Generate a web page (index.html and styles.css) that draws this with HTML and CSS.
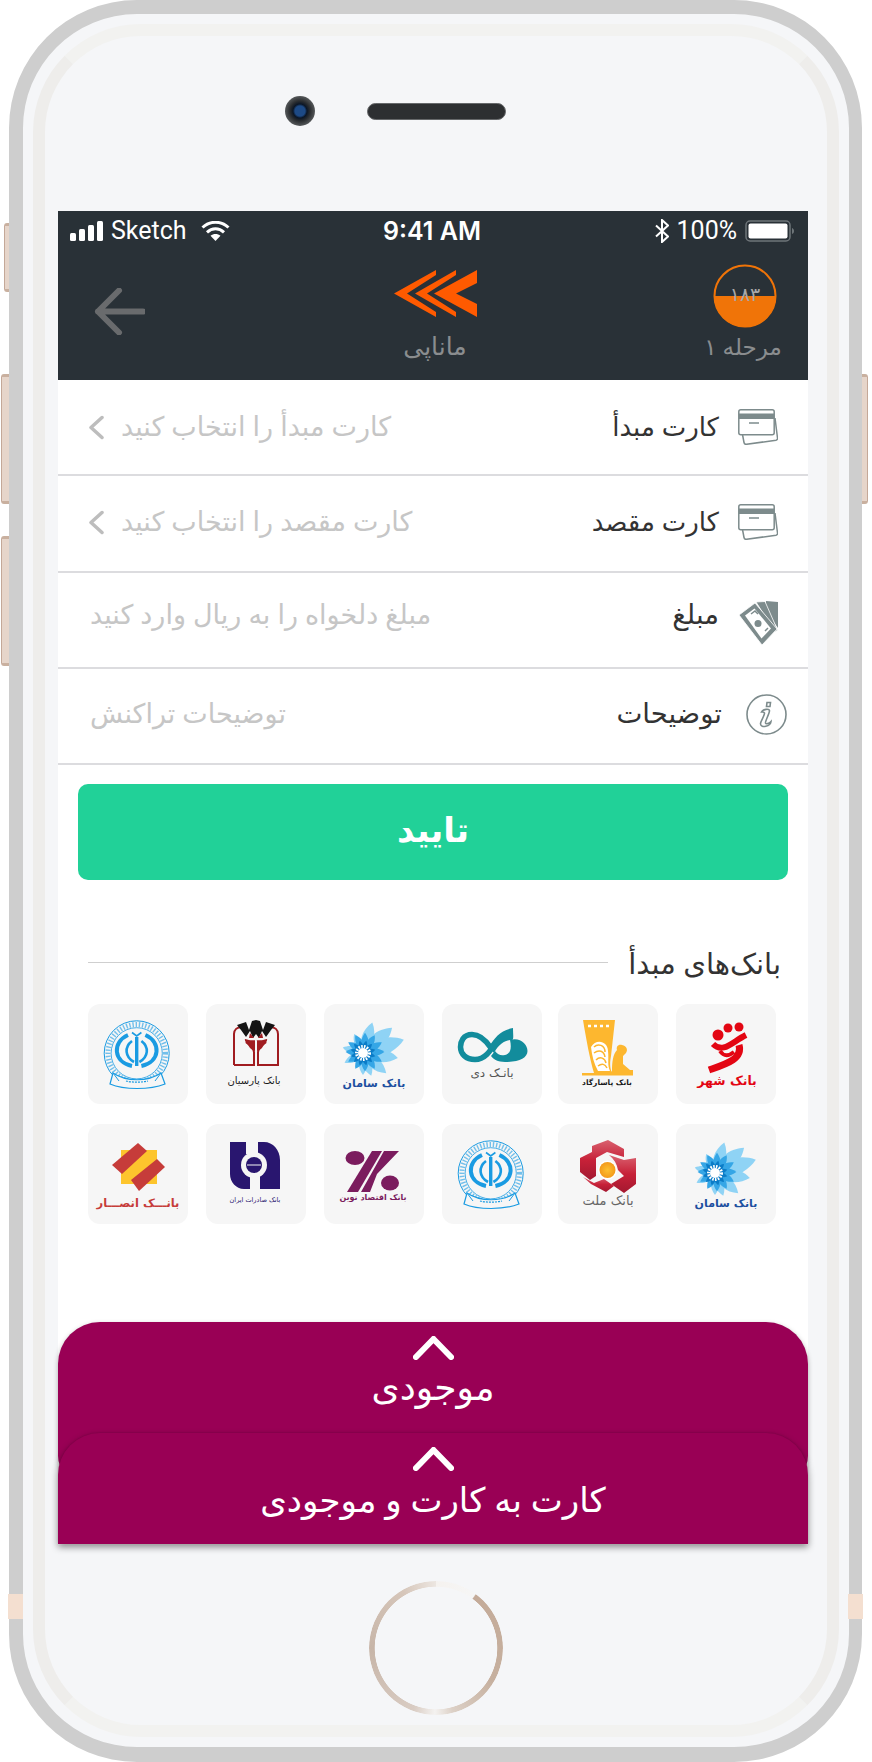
FILE: index.html
```html
<!DOCTYPE html>
<html lang="fa">
<head>
<meta charset="utf-8">
<title>مانا‌پی</title>
<link rel="stylesheet" href="styles.css">
</head>
<body>
<svg class="defs" width="0" height="0" aria-hidden="true">
  <defs>
    <path id="petal" d="M0 0C5.5-6 5.5-15 0-22C-5.5-15-5.5-6 0 0Z"/>
    <g id="ring">
      <use href="#petal"/><use href="#petal" transform="rotate(30)"/><use href="#petal" transform="rotate(60)"/><use href="#petal" transform="rotate(90)"/><use href="#petal" transform="rotate(120)"/><use href="#petal" transform="rotate(150)"/><use href="#petal" transform="rotate(180)"/><use href="#petal" transform="rotate(210)"/><use href="#petal" transform="rotate(240)"/><use href="#petal" transform="rotate(270)"/><use href="#petal" transform="rotate(300)"/><use href="#petal" transform="rotate(330)"/>
    </g>
    <g id="saman">
      <g fill="#8fd3f5">
        <use href="#petal" transform="translate(39 49) rotate(17) scale(1.45)"/>
        <use href="#petal" transform="translate(39 49) rotate(49) scale(1.75)"/>
        <use href="#petal" transform="translate(39 49) rotate(72) scale(1.95)"/>
        <use href="#petal" transform="translate(39 49) rotate(98) scale(1.6)"/>
        <use href="#petal" transform="translate(39 49) rotate(131) scale(1.4)"/>
        <use href="#petal" transform="translate(39 49) rotate(160) scale(1.1)"/>
        <use href="#petal" transform="translate(39 49) rotate(180) scale(1)"/>
        <use href="#petal" transform="translate(39 49) rotate(242) scale(.95)"/>
        <use href="#petal" transform="translate(39 49) rotate(285) scale(.95)"/>
        <use href="#petal" transform="translate(39 49) rotate(335) scale(.95)"/>
      </g>
      <use href="#ring" fill="#35a6e6" transform="translate(41 48) scale(.88)"/>
      <use href="#ring" fill="#0b7cc7" transform="translate(39 49) rotate(15) scale(.58)"/>
      <circle cx="39" cy="49" r="5" fill="#fff"/>
      <circle cx="39" cy="49" r="6.500" fill="none" stroke="#fff" stroke-width="3" stroke-dasharray="1.6 1.2"/>
    </g>
    <g id="sepah" fill="none" stroke="#1a9be2">
      <circle cx="48.700" cy="49.300" r="32.500" stroke-width="1"/>
      <circle cx="48.700" cy="49.300" r="28.800" stroke-width="5" stroke-dasharray="1.4 1.8" stroke-opacity=".6"/>
      <circle cx="48.700" cy="49.300" r="25.600" stroke-width=".8"/>
      <path d="M40 31C24 38 25 58 44 62" stroke-width="4"/>
      <path d="M57.400 31C73.400 38 72.400 58 53.400 62" stroke-width="4"/>
      <path d="M44 37C36 43 37 53 46 58" stroke-width="2.600"/>
      <path d="M53.400 37C61.400 43 60.400 53 51.400 58" stroke-width="2.600"/>
      <path d="M48.700 33V62" stroke-width="3.400"/>
      <path d="M44 28.500L48.700 32L53.400 28.500" stroke-width="1.600"/>
      <path d="M25 69C38 78 60 78 73 69L77 80C62 86 36 86 22 80Z" fill="#f6f6f6" stroke-width="1.200"/>
      <path d="M25 69L31 77M73 69L67 77" stroke-width="1"/>
      <path d="M38 77C44 78.500 54 78.500 60 77" stroke-width="1.200" stroke-dasharray="2 1"/>
    </g>
    <g id="card" fill="none" stroke="#7d8b8c" stroke-width="1.500">
      <path d="M4.500 25.500L6 33.500C6.300 35 7.300 35.500 8.500 35.300L38 31.200C39.200 31 39.700 30 39.500 29L37 9"/>
      <rect x=".8" y=".8" width="35.400" height="25" rx="2" fill="#fff"/>
      <rect x=".8" y="4.500" width="35.400" height="5.500" fill="#7d8b8c" stroke="none"/>
      <path d="M11 14H21"/>
    </g>
    <path id="chev" d="M3 21L20.500 3L38 21" fill="none" stroke="#fff" stroke-width="6" stroke-linecap="round" stroke-linejoin="round"/>
  </defs>
</svg>

<div class="device">
  <span class="side side-a"></span><span class="side side-b"></span><span class="side side-c"></span><span class="side side-d"></span>
  <span class="band band-l"></span><span class="band band-r"></span>
  <div class="bezel">
    <div class="earpiece">
      <span class="camera"></span>
      <span class="speaker"></span>
    </div>

    <main class="screen" dir="rtl">
      <div class="topbar">
        <div class="status" dir="ltr">
          <div class="status-side">
            <svg class="ic-signal" width="33" height="20" viewBox="0 0 33 20"><rect x="0" y="12" width="6" height="8" rx="1.500" fill="#fff"/><rect x="9" y="8" width="6" height="12" rx="1.500" fill="#fff"/><rect x="18" y="4" width="6" height="16" rx="1.500" fill="#fff"/><rect x="27" y="0" width="6" height="20" rx="1.500" fill="#fff"/></svg>
            <span>Sketch</span>
            <svg class="ic-wifi" width="29" height="20" viewBox="0 0 29 20" fill="none" stroke="#fff" stroke-width="3"><path d="M1.500 6.500C9 -.5 20 -.5 27.500 6.500"/><path d="M6 11.300C11 6.700 18 6.700 23 11.300"/><path d="M14.500 20L9.500 14.800C12.500 12.300 16.500 12.300 19.500 14.800Z" fill="#fff" stroke="none"/></svg>
          </div>
          <span class="clock">9:41 AM</span>
          <div class="status-side status-right">
            <svg width="14" height="24" viewBox="0 0 14 24" fill="none" stroke="#fff" stroke-width="2"><path d="M1 6.500L13 17.500L7 23V1L13 6.500L1 17.500"/></svg>
            <span>100%</span>
            <svg class="ic-batt" width="49" height="22" viewBox="0 0 49 22"><rect x="1" y="1" width="44" height="20" rx="4" fill="none" stroke="#6e7579" stroke-width="1.500"/><rect x="3.500" y="3.500" width="39" height="15" rx="2" fill="#fff"/><path d="M47 8C48.300 8.500 49 9.500 49 11S48.300 13.500 47 14Z" fill="#6e7579"/></svg>
          </div>
        </div>
        <header class="appbar">
          <div class="appcol step">
            <svg class="step-ring" width="64" height="64" viewBox="0 0 64 64"><circle cx="32" cy="32" r="30.500" fill="none" stroke="#f07408" stroke-width="2"/><path d="M1 32H63A31 31 0 0 1 1 32Z" fill="#f07408"/><text class="step-num" x="32" y="37" text-anchor="middle">۱۸۳</text></svg>
            <span class="appcap">مرحله ۱</span>
          </div>
          <div class="appcol brand">
            <svg width="83" height="47" viewBox="0 0 83 47" fill="#ff5a00"><path d="M0 23.500L42 0V5L13 23.500L42 42V47Z"/><path d="M21 23.500L62 0V5L33 23.500L62 42V47Z"/><path d="M40 23.500L83 0V13L62 23.500L83 34V47Z"/></svg>
            <span class="appcap">مانا‌پی</span>
          </div>
          <div class="back">
            <svg width="51" height="47" viewBox="0 0 51 47" fill="none" stroke="#696b6d" stroke-width="6" stroke-linecap="round" stroke-linejoin="round"><path d="M49 23.500H4M25 2.500L4 23.500L25 44.500"/></svg>
          </div>
        </header>
      </div>

      <section class="form">
        <div class="row">
          <div class="field"><svg class="ic-card" width="40" height="36" viewBox="0 0 40 36"><use href="#card"/></svg><span class="label">کارت مبدأ</span></div>
          <div class="choice"><span class="hint">کارت مبدأ را انتخاب کنید</span><svg width="16" height="25" viewBox="0 0 16 25" fill="none" stroke="#bdbdbd" stroke-width="3.500" stroke-linecap="round" stroke-linejoin="round"><path d="M14 2.500L3 12.500L14 22.500"/></svg></div>
        </div>
        <div class="row row-second">
          <div class="field"><svg class="ic-card" width="40" height="36" viewBox="0 0 40 36"><use href="#card"/></svg><span class="label">کارت مقصد</span></div>
          <div class="choice"><span class="hint">کارت مقصد را انتخاب کنید</span><svg width="16" height="25" viewBox="0 0 16 25" fill="none" stroke="#bdbdbd" stroke-width="3.500" stroke-linecap="round" stroke-linejoin="round"><path d="M14 2.500L3 12.500L14 22.500"/></svg></div>
        </div>
        <div class="row row-plain row-amount">
          <div class="field"><svg class="ic-money" width="40" height="44" viewBox="0 0 40 44"><path d="M28 0L40 1L40 27L28 10Z" fill="#7d8b8c"/><path d="M18 1L27 .5L39.500 29L37 31Z" fill="#7d8b8c" stroke="#fff" stroke-width=".8"/><path d="M1 14L17 2L39 28L24 44Z" fill="#7d8b8c" stroke="#fff" stroke-width=".8"/><path d="M7 14.500L16.500 7.500L33 27.500L23.500 37.500Z" fill="#fff"/><path d="M13 13L17 10L20 13M27 30L30 27" stroke="#7d8b8c" stroke-width="1.500" fill="none"/><circle cx="20" cy="22.500" r="3.500" fill="#7d8b8c"/></svg><span class="label">مبلغ</span></div>
          <span class="hint">مبلغ دلخواه را به ریال وارد کنید</span>
        </div>
        <div class="row row-plain row-info">
          <div class="field"><svg class="ic-info" width="41" height="41" viewBox="0 0 41 41" fill="none" stroke="#7d8b8c" stroke-width="1.600"><circle cx="20.500" cy="20.500" r="19.500"/><path d="M21 8.500L24.500 8.500L24 12.500L20.500 12.500Z"/><path d="M15.500 18C17 15 23.500 14.500 23.500 16.500C23.500 20 19 27 19.500 29C20 30.500 23 29.500 25 27.500C24.500 32.500 15 34.500 14.500 30C14.200 27 19 21.500 18.500 19C18 17.500 16.500 18 15.500 18Z"/></svg><span class="label">توضیحات</span></div>
          <span class="hint">توضیحات تراکنش</span>
        </div>
      </section>

      <div class="actions"><button class="confirm" type="button">تایید</button></div>

      <section class="banks">
        <div class="banks-head"><span class="banks-title">بانک‌های مبدأ</span><span class="banks-rule"></span></div>
        <div class="bank-grid">
          <div class="tile">
            <svg viewBox="0 0 100 100"><circle cx="42" cy="31" r="5.500" fill="#e30613"/><circle cx="52" cy="24" r="4.500" fill="#e30613"/><circle cx="63" cy="23" r="4.500" fill="#e30613"/><path d="M37 40C47 50 56 38 70 31" fill="none" stroke="#e30613" stroke-width="6"/><path d="M63 41C67 55 50 60 33 66" fill="none" stroke="#e30613" stroke-width="7"/><path d="M44 47C48 53 53 52 58 48" fill="none" stroke="#e30613" stroke-width="4"/><text class="cap cap-shahr" x="51" y="81" text-anchor="middle">بانک شهر</text></svg>
          </div>
          <div class="tile">
            <svg viewBox="0 0 100 100"><path d="M25 16H57L53 52C51 62 53 66 54 69H36C32 56 28 34 25 16Z" fill="#fdb72f"/><path d="M30 22h3M36 22h3M42 22h3M48 22h3" stroke="#fff" stroke-width="2.500"/><path d="M33 43C38 34 50 37 50 47C51 55 49 61 52 67H40C36 60 34 52 33 43Z" fill="#fff"/><path d="M36 43C40 39 47 41 47 48M36 49C41 45 46 47 47 53M38 56C42 52 47 54 48 59M40 62C44 59 47 60 49 64" stroke="#fdb72f" stroke-width="1.500" fill="none"/><path d="M54 67C54 58 55 50 59 46C58 43 60 40 64 41C69 42 70 46 68 49L65 52V60L72 66H75V69H52Z" fill="#fdb72f"/><rect x="24" y="69" width="51" height="2.500" fill="#fdb72f"/><text class="cap cap-pasargad" x="49" y="81" text-anchor="middle">بانک پاسارگاد</text></svg>
          </div>
          <div class="tile">
            <svg viewBox="0 0 100 100"><path d="M49 44C43 35 37 30.500 30 30.500C21 30.500 18.500 38 18.500 43C18.500 50 24 55.500 33 55.500C44 55.500 50 44 54 38" fill="none" stroke="#128c9c" stroke-width="5.500"/><path d="M71 24C59 26 52 34 47 43L52 49C57 40 63 36 70 36C72 36 71 30 71 24Z" fill="#128c9c"/><path d="M68 36C78 33 85.500 40 85.500 47C85.500 54 77 58 63 58C56 58 51 55 49 52L53 47C56 51 59 52 63 51C68 50 70 45 68 36Z" fill="#128c9c"/><text class="cap cap-dey" x="50" y="73" text-anchor="middle">بانـک دی</text></svg>
          </div>
          <div class="tile">
            <svg viewBox="0 0 100 100"><use href="#saman"/><text class="cap cap-saman" x="50" y="83" text-anchor="middle">بانک سامان</text></svg>
          </div>
          <div class="tile">
            <svg viewBox="0 0 100 100"><path d="M28 61V30C28 26 31 23 36 23M64 23C69 23 72 26 72 30V61H52V48C53 42 58 40 60 38M28 61H48V48C47 42 42 40 40 38" fill="none" stroke="#a01c20" stroke-width="2"/><path d="M44 44C46 46 48 47 49 47V36H51V47C52 47 54 46 56 44C58 40 62 37 61 35C55 37 53 36 50 36C47 36 45 37 39 35C38 37 42 40 44 44Z" fill="#a01c20"/><path d="M31 21L40 18L43 26L46 17L50 16L54 17L57 26L60 18L69 21L65 26L60 33L56 27L53 34L50 30L47 34L44 27L40 33L35 26Z" fill="#141414"/><path d="M44 29L48 34H43ZM56 29L52 34H57Z" fill="#a01c20"/><text class="cap cap-parsian" x="48" y="80" text-anchor="middle">بانک پارسیان</text></svg>
          </div>
          <div class="tile">
            <svg viewBox="0 0 100 100"><use href="#sepah"/></svg>
          </div>
          <div class="tile">
            <svg viewBox="0 0 100 100"><use href="#saman"/><text class="cap cap-saman" x="50" y="83" text-anchor="middle">بانک سامان</text></svg>
          </div>
          <div class="tile">
            <svg viewBox="0 0 100 100"><defs><linearGradient id="mellatG" x1="0" y1="0" x2="0" y2="1"><stop offset="0" stop-color="#d9616f"/><stop offset=".5" stop-color="#c72138"/><stop offset="1" stop-color="#a31830"/></linearGradient><radialGradient id="mellatY"><stop offset="0" stop-color="#fdc02f"/><stop offset="1" stop-color="#f39a1b"/></radialGradient></defs><path d="M50 16L66 25V33L49 28L38 34V52L32 56L22 48V34L34 28V22Z" fill="url(#mellatG)"/><path d="M51 31L66 36L78 34V60L66 69L53 60L66 52L60 46C59 40 56 35 51 31Z" fill="url(#mellatG)"/><path d="M25 53L36 59L46 55L56 62L48 68L33 60Z" fill="url(#mellatG)"/><circle cx="49.500" cy="46" r="9.500" fill="#fff"/><circle cx="49.500" cy="46" r="8" fill="url(#mellatY)"/><text class="cap cap-mellat" x="50" y="81" text-anchor="middle">بانک ملت</text></svg>
          </div>
          <div class="tile">
            <svg viewBox="0 0 100 100"><use href="#sepah"/></svg>
          </div>
          <div class="tile">
            <svg viewBox="0 0 100 100"><ellipse cx="31" cy="34" rx="9.500" ry="7" fill="#7b1c5e"/><ellipse cx="66" cy="59" rx="9" ry="7.500" fill="#7b1c5e"/><path d="M48 27H58L34 68H23Z" fill="#7b1c5e"/><path d="M60 27H75L53 50L46 68H37Z" fill="#7b1c5e"/><text class="cap cap-novin" x="49" y="76" text-anchor="middle">بانک اقتصاد نوین</text></svg>
          </div>
          <div class="tile">
            <svg viewBox="0 0 100 100"><path d="M24 18H40V30H52V18H58C67 18 74 26 74 36V65H54V52H44V65H38C30 65 24 58 24 50Z" fill="#29166f"/><circle cx="48" cy="41" r="13" fill="#f6f6f6"/><circle cx="48" cy="41" r="8" fill="#29166f"/><path d="M41 41H55" stroke="#f6f6f6" stroke-width="1"/><text class="cap cap-saderat" x="49" y="78" text-anchor="middle">بانک صادرات ایران</text></svg>
          </div>
          <div class="tile">
            <svg viewBox="0 0 100 100"><rect x="33" y="26" width="36" height="34" fill="#fdc52d"/><path d="M24 41L50 19L59 27L34 50Z" fill="#c63c3a"/><path d="M43 56L69 35L77 43L51 67Z" fill="#c63c3a"/><text class="cap cap-ansar" x="50" y="83" text-anchor="middle">بانـــک انصـــار</text></svg>
          </div>
        </div>
      </section>

      <div class="sheet sheet-back">
        <svg class="sheet-chev" width="41" height="24" viewBox="0 0 41 24"><use href="#chev"/></svg>
        <span class="sheet-title">موجودی</span>
      </div>
      <div class="sheet sheet-front">
        <svg class="sheet-chev" width="41" height="24" viewBox="0 0 41 24"><use href="#chev"/></svg>
        <span class="sheet-title">کارت به کارت و موجودی</span>
      </div>
    </main>

    <div class="home-area"><span class="home"></span></div>
  </div>
</div>
</body>
</html>
```

FILE: styles.css
```css
* { box-sizing: border-box; }
html, body { margin: 0; padding: 0; background: #fff; }
body {
  width: 872px;
  height: 1762px;
  overflow: hidden;
  font-family: "Noto Sans", "DejaVu Sans", sans-serif;
}
.defs { position: absolute; }

.device {
  position: relative;
  width: 853px;
  height: 1762px;
  margin-left: 9px;
  padding: 10px;
  border-style: solid;
  border-color: #cecece;
  border-width: 14px 13px 15px 14px;
  border-radius: 128px;
  background: #f5f6f8;
}
.side, .band { position: absolute; }
.side {
  background: #e6d5ca;
  border-left: 1px solid #c4a898;
  border-top: 3px solid #c9b09f;
  border-bottom: 3px solid #c9b09f;
  border-radius: 3px 0 0 3px;
}
.side-a { left: -19px; top: 209px; width: 5px; height: 69px; }
.side-b { left: -22px; top: 360px; width: 8px; height: 130px; }
.side-c { left: -22px; top: 522px; width: 8px; height: 130px; }
.side-d {
  right: -19px; top: 360px; width: 6px; height: 130px;
  border-left: 0; border-right: 1px solid #c4a898; border-radius: 0 3px 3px 0;
}
.band { top: 1580px; width: 15px; height: 25px; background: #f4dfd0; }
.band-l { left: -15px; }
.band-r { right: -14px; }

.bezel {
  height: 1713px;
  padding: 0 19px 0 13px;
  border: 12px solid #eeedeb;
  border-top-color: #f2f2f0;
  border-bottom-color: #f2f2f0;
  border-radius: 108px;
  background: #f5f6f8;
}
.earpiece {
  display: flex;
  align-items: center;
  gap: 52px;
  height: 175px;
  padding: 0 0 25px 227px;
}
.camera {
  width: 30px;
  height: 30px;
  border-radius: 50%;
  background: radial-gradient(circle, #1d4a86 0 5px, #0b1626 7px, #2a2d30 10px, #55585a 15px);
}
.speaker {
  width: 139px;
  height: 17px;
  border-radius: 9px;
  background: #2d2f31;
  border: 1px solid #66686a;
}

.screen {
  position: relative;
  width: 750px;
  height: 1334px;
  background: #fff;
}
.topbar { height: 169px; background: #293137; color: #fff; }
.status {
  display: flex;
  justify-content: space-between;
  align-items: center;
  height: 39px;
  padding: 0 14px 0 12px;
  font-family: Roboto, "Noto Sans", sans-serif;
  font-size: 25px;
}
.status-side { display: flex; align-items: center; gap: 8px; width: 280px; }
.status-side .ic-wifi { margin-left: 6px; }
.status-right { justify-content: flex-end; }
.clock { font-family: Inter, Roboto, sans-serif; font-weight: 600; font-size: 25px; }

.appbar {
  display: grid;
  grid-template-columns: 1fr auto 1fr;
  align-items: start;
  height: 130px;
  padding: 0 27px 0 31px;
}
.appcol { display: flex; flex-direction: column; align-items: center; }
.step { justify-self: start; width: 76px; margin-top: 14px; }
.step-ring { margin-left: 4px; }
.brand { margin-top: 20px; }
.brand .appcap { margin-top: 10px; font-size: 25px; }
.step .appcap { margin-top: 0; }
.appcap { font-size: 23px; line-height: 36px; color: #8a8d8f; white-space: nowrap; }
.step-num { font-size: 19px; fill: #a8a8a8; }
.back { justify-self: end; margin: 38px 0 0 0; transform: translateX(5px); height: 47px; }

.row {
  display: flex;
  justify-content: space-between;
  align-items: center;
  height: 96px;
  padding: 0 30px;
  border-bottom: 2px solid #dcdcdf;
}
.row-second { height: 97px; padding-bottom: 3px; }
.field { display: flex; align-items: center; gap: 19px; }
.label { font-size: 26px; color: #333; white-space: nowrap; margin-bottom: 3px; }
.choice { display: flex; align-items: center; gap: 17px; }
.hint { font-size: 27px; color: #c6c6c6; white-space: nowrap; margin-bottom: 3px; }
.row-plain { padding-left: 32px; }
.row-plain .label { font-size: 27.500px; }
.row-amount .label, .row-amount .hint { margin-bottom: 14px; }
.ic-money { margin-top: 6px; }
.row-info { padding-right: 21px; padding-bottom: 3px; }
.row-info .label, .row-info .hint { margin-bottom: 5px; }
.row-info .field { gap: 24px; }

.actions { padding: 19px 20px 0; }
.confirm {
  display: block;
  width: 710px;
  height: 96px;
  padding-bottom: 8px;
  border: 0;
  border-radius: 10px;
  background: #21d198;
  color: #fff;
  font-family: inherit;
  font-size: 34px;
  font-weight: 700;
}
.banks { padding: 0 32px 0 30px; }
.banks-head { display: flex; align-items: center; gap: 20px; height: 40px; margin-top: 62px; }
.banks-title { font-size: 29px; color: #333; white-space: nowrap; margin-right: -5px; }
.banks-rule { flex: 1; height: 1px; background: #cfcfcf; }
.bank-grid {
  display: grid;
  grid-template-columns: 102px 100px 102px 102px 102px 100px;
  column-gap: 16px;
  row-gap: 20px;
  margin-top: 22px;
}
.tile { width: 100px; height: 100px; border-radius: 12px; background: #f6f6f6; justify-self: start; }
.tile svg { display: block; width: 100%; height: 100%; }
.cap { font-weight: 700; font-family: "DejaVu Sans", sans-serif; }
.cap-shahr { font-size: 12.500px; fill: #e30613; }
.cap-pasargad { font-size: 7.500px; fill: #1a1a1a; }
.cap-dey { font-size: 12px; fill: #555; font-weight: 400; }
.cap-saman { font-size: 11px; fill: #1c4fa0; }
.cap-parsian { font-size: 10px; fill: #1a1a1a; font-weight: 400; }
.cap-mellat { font-size: 13px; fill: #666; font-weight: 400; }
.cap-novin { font-size: 8px; fill: #7b1c5e; }
.cap-saderat { font-size: 6.500px; fill: #29166f; font-weight: 400; }
.cap-ansar { font-size: 11.500px; fill: #c63c3a; }

.sheet {
  position: absolute;
  left: 0;
  right: 0;
  display: flex;
  flex-direction: column;
  align-items: center;
  background: #990055;
  color: #fff;
}
.sheet-back { bottom: 65px; height: 158px; padding-top: 14px; border-radius: 42px 42px 24px 24px; box-shadow: 0 2px 5px rgba(0, 0, 0, .3); }
.sheet-front { bottom: 1px; height: 111px; padding-top: 14px; border-radius: 42px 42px 0 0; box-shadow: 0 3px 7px rgba(0, 0, 0, .45), 0 -1px 1px rgba(120, 0, 70, .25); }
.sheet-chev { display: block; flex: none; }
.sheet-title { line-height: 44px; white-space: nowrap; }
.sheet-back .sheet-title { margin-top: 5px; font-size: 36px; }
.sheet-front .sheet-title { margin-top: 6px; font-size: 34px; }

.home-area { display: flex; justify-content: center; padding: 36px 0 0 6px; }
.home {
  width: 134px;
  height: 134px;
  border-radius: 50%;
  background: conic-gradient(#f5f2ef 0deg, #f6f6f6 36deg, #c4ab99 37deg, #c6b09f 120deg, #dcd0c6 165deg, #f4f2f0 181deg, #d9ccc3 200deg, #c7b5a8 270deg, #d6c6ba 330deg, #ece6e1 360deg);
  -webkit-mask: radial-gradient(closest-side, transparent 91%, #000 92%);
  mask: radial-gradient(closest-side, transparent 91%, #000 92%);
}
```
